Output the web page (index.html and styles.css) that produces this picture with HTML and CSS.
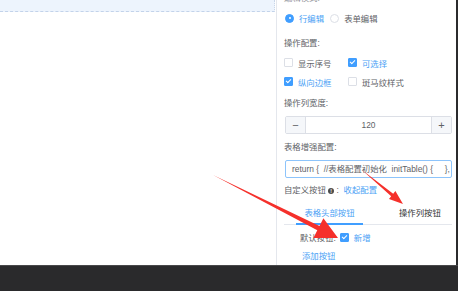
FILE: index.html
```html
<!DOCTYPE html>
<html lang="zh-CN">
<head>
    <meta charset="UTF-8">
    <meta name="viewport" content="width=device-width, initial-scale=1.0">
    <title>表格配置</title>
    <link rel="stylesheet" href="styles.css">
</head>
<body>
    <div class="app">
        <div class="main">
            <div class="canvas">
                <div class="canvas-head"></div>
            </div>

            <div class="panel">
                <div class="label cut">编辑模式:</div>

                <div class="radio-row">
                    <span class="radio checked"></span><span class="opt active">行编辑</span>
                    <span class="radio"></span><span class="opt">表单编辑</span>
                </div>

                <div class="label lbl-ops">操作配置:</div>
                <div class="check-row">
                    <span class="check-item"><span class="box"></span><span class="opt">显示序号</span></span>
                    <span class="check-item"><span class="box checked"></span><span class="opt active">可选择</span></span>
                </div>
                <div class="check-row">
                    <span class="check-item"><span class="box checked"></span><span class="opt active">纵向边框</span></span>
                    <span class="check-item"><span class="box"></span><span class="opt">斑马纹样式</span></span>
                </div>

                <div class="label lbl-width">操作列宽度:</div>
                <div class="number-input">
                    <span class="num-btn minus">−</span>
                    <span class="num-value">120</span>
                    <span class="num-btn plus">+</span>
                </div>

                <div class="label lbl-table">表格增强配置:</div>
                <div class="code-input">return {&nbsp; //表格配置初始化&nbsp; initTable() {&nbsp;&nbsp;&nbsp;&nbsp; },&nbsp; //</div>

                <div class="label lbl-custom">自定义按钮 <span class="info">!</span> :&nbsp; <span class="link">收起配置</span></div>

                <div class="tabs">
                    <span class="tab active">表格头部按钮</span>
                    <span class="tab">操作列按钮</span>
                </div>

                <div class="default-row">
                    <span class="opt">默认按钮:</span>
                    <span class="box checked"></span><span class="opt active">新增</span>
                </div>
                <div class="add-row"><span class="link">添加按钮</span></div>
            </div>
            <div class="edge"></div>
        </div>
        <div class="footer"></div>
    </div>

    <svg class="arrows" width="458" height="291" viewBox="0 0 458 291">
        <polygon points="213,175 317.3,230.3 313.4,237.9 338,238 323.4,218.3 319.5,225.9" fill="#f5302b"/>
        <polygon points="362,170 391.2,196.2 389,198.9 403,204 395.4,191.1 393.2,193.8" fill="#f5302b"/>
    </svg>
</body>
</html>
```

FILE: styles.css
```css
body {
    margin: 0;
    font-family: "Liberation Sans", "Noto Sans CJK SC", sans-serif;
    font-size: 8.4px;
    color: #606266;
    background: #2a2a2c;
}
.app {
    width: 458px;
    height: 291px;
    overflow: hidden;
    position: relative;
}
.main {
    display: flex;
    height: 265px;
    background: #fff;
}
.canvas {
    width: 276px;
    border-right: 1px solid #e4e7ed;
}
.canvas-head {
    height: 11px;
    background: #edf4fd;
    border-bottom: 1px dashed #c3d3ea;
    border-right: 1px dotted #c9d6e8;
    margin-right: 1px;
}
.panel {
    width: 168px;
    padding: 0 4px 0 7px;
    overflow: hidden;
}
.edge {
    width: 2px;
    background: #2b2b2d;
}
.footer {
    height: 25px;
    border-top: 1px solid #48484a;
    background: #2a2a2c;
}

.label {
    color: #606266;
    white-space: nowrap;
}
.cut {
    height: 10px;
    line-height: 10px;
    margin-top: -7px;
    color: #909399;
}
.radio-row {
    height: 30px;
    display: flex;
    align-items: center;
    padding-left: 1px;
}
.radio {
    width: 7px;
    height: 7px;
    border: 1px solid #dcdfe6;
    border-radius: 50%;
    box-sizing: content-box;
    margin-right: 5px;
    position: relative;
}
.radio + .opt {
    margin-right: 6px;
}
.radio.checked {
    background: #409eff;
    border-color: #409eff;
}
.radio.checked::after {
    content: "";
    position: absolute;
    left: 2.5px;
    top: 2.5px;
    width: 2px;
    height: 2px;
    border-radius: 50%;
    background: #fff;
}
.opt {
    white-space: nowrap;
}
.opt.active,
.link {
    color: #4a9ff5;
}
.lbl-ops {
    height: 20px;
    line-height: 20px;
}
.check-row {
    height: 19px;
    display: flex;
    align-items: center;
}
.check-item {
    display: flex;
    align-items: center;
    width: 64px;
}
.box {
    display: inline-block;
    width: 7px;
    height: 7px;
    border: 1px solid #dcdfe6;
    border-radius: 1px;
    margin-right: 5px;
    position: relative;
    flex-shrink: 0;
}
.box.checked {
    background: #409eff;
    border-color: #409eff;
}
.box.checked::after {
    content: "";
    position: absolute;
    left: 2px;
    top: 0;
    width: 2px;
    height: 4px;
    border: solid #fff;
    border-width: 0 1px 1px 0;
    transform: rotate(45deg);
}
.lbl-width {
    height: 25px;
    line-height: 25px;
}
.number-input {
    height: 16px;
    display: flex;
    border: 1px solid #dcdfe6;
    border-radius: 2px;
    margin-left: 1px;
}
.num-btn {
    width: 19px;
    background: #f5f7fa;
    color: #606266;
    text-align: center;
    line-height: 16px;
    font-size: 11px;
}
.minus {
    border-right: 1px solid #dcdfe6;
}
.plus {
    border-left: 1px solid #dcdfe6;
}
.num-value {
    flex: 1;
    text-align: center;
    line-height: 16px;
    color: #606266;
}
.lbl-table {
    height: 26px;
    line-height: 26px;
}
.code-input {
    height: 16px;
    line-height: 16px;
    border: 1px solid #8dc4fb;
    border-radius: 2px;
    padding-left: 6px;
    margin-left: 1px;
    white-space: nowrap;
    overflow: hidden;
    color: #606266;
}
.lbl-custom {
    height: 25px;
    line-height: 25px;
}
.info {
    display: inline-block;
    width: 6px;
    height: 6px;
    border-radius: 50%;
    background: #4c4c4c;
    color: #fff;
    font-size: 5px;
    line-height: 6px;
    text-align: center;
    font-weight: bold;
    vertical-align: 0;
}
.tabs {
    height: 21px;
    display: flex;
    border-bottom: 1px solid #e4e7ed;
}
.tab {
    line-height: 20px;
    white-space: nowrap;
    color: #303133;
}
.tab.active {
    margin-left: 12px;
    width: 67px;
    text-align: center;
    color: #4a9ff5;
    border-bottom: 2px solid #409eff;
    margin-bottom: -1px;
    line-height: 20px;
}
.tab + .tab {
    margin-left: 36px;
}
.default-row {
    height: 24px;
    display: flex;
    align-items: center;
    padding-left: 16px;
}
.default-row .opt:first-child {
    margin-right: 4px;
}
.add-row {
    height: 14px;
    line-height: 14px;
    padding-left: 18px;
}
.arrows {
    position: absolute;
    left: 0;
    top: 0;
    pointer-events: none;
}
```
